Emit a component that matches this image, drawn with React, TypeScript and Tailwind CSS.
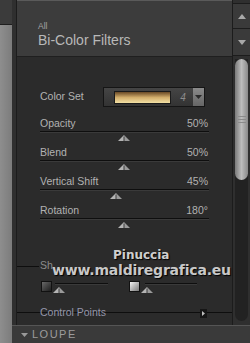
import React from "react";

const Thumb: React.FC<{ left: number }> = ({ left }) => (
  <svg
    width="12"
    height="6"
    viewBox="0 0 12 6"
    className="absolute top-[2px]"
    style={{ left: left - 6 }}
  >
    <polygon points="0,6 6,0 6,6" fill="#b4b4b4" />
    <polygon points="6,0 12,6 6,6" fill="#9a9a9a" />
    <line x1="6" y1="1.5" x2="6" y2="6" stroke="#3a3a3a" strokeWidth="1" />
  </svg>
);

const SliderRow: React.FC<{ label: string; value: string; pct: number }> = ({
  label,
  value,
  pct,
}) => (
  <div className="h-[29px]">
    <div className="flex h-[14px] items-center justify-between text-[10.5px] text-[#b2b2b2]">
      <span>{label}</span>
      <span className="pr-[1px]">{value}</span>
    </div>
    <div className="h-px bg-[#0e0e0e]" />
    <div className="h-px bg-[#3a3a3a]" />
    <div className="relative h-[13px]">
      <Thumb left={(168 * pct) / 100} />
    </div>
  </div>
);

const App: React.FC = () => {
  return (
    <div
      className="relative flex h-[343px] w-[250px] overflow-hidden bg-[#2b2b2b]"
      style={{ fontFamily: '"Liberation Sans", Arial, sans-serif' }}
    >
      {/* left neighbour strip */}
      <div className="flex w-[12px] flex-col">
        <div className="h-[25px] border-b border-[#1e1e1e] bg-[#3b3b3b]" />
        <div className="flex-1 bg-gradient-to-r from-[#8e8e8e] to-[#7c7c7c]" />
      </div>

      <div className="flex flex-1 flex-col">
        <div className="flex h-[325px]">
          <div className="w-[5px] border-r border-[#1c1c1c] bg-[#2f2f2f]" />

          {/* panel */}
          <div className="flex flex-1 flex-col border-t border-[#5a5a5a]">
            <div className="h-[56px] border-b border-[#1f1f1f] bg-[#3c3c3c] pl-[21px] pt-[20px]">
              <div className="text-[8.5px] leading-[10px] text-[#a4a4a4]">All</div>
              <div className="mt-[1px] text-[14px] leading-[17px] text-[#b8b8b8]">Bi-Color Filters</div>
            </div>

            <div className="flex-1 bg-[#2b2b2b] pl-[23px] pr-[23px] pt-[30px]">
              {/* color set */}
              <div className="flex h-[20px] items-center">
                <span className="w-[63px] text-[10.5px] text-[#b2b2b2]">Color Set</span>
                <div className="flex h-[20px] w-[102px] items-center border border-[#151515] bg-gradient-to-b from-[#454545] to-[#333333]">
                  <div className="ml-[10px] h-[13px] w-[58px] border border-[#1a1a1a] bg-gradient-to-b from-[#6a4a26] via-[#d2ae6c] to-[#f2e0a4]" />
                  <span className="ml-[9px] w-[13px] text-[10px] italic text-[#8c8c8c]">4</span>
                  <div className="flex h-[18px] w-[11px] items-center justify-center bg-gradient-to-b from-[#8a8a8a] to-[#666666]">
                    <svg width="7" height="4" viewBox="0 0 7 4">
                      <polygon points="0,0 7,0 3.5,4" fill="#2a2a2a" />
                    </svg>
                  </div>
                </div>
              </div>

              <div className="mt-[10px]">
                <SliderRow label="Opacity" value="50%" pct={50} />
                <SliderRow label="Blend" value="50%" pct={50} />
                <SliderRow label="Vertical Shift" value="45%" pct={45} />
                <SliderRow label="Rotation" value="180°" pct={50} />
              </div>

              {/* shadows / highlights, mostly hidden under the watermark */}
              <div className="-ml-[23px] mt-[26px] flex h-[14px] items-center">
                <div className="h-px w-[22px] bg-[#0e0e0e]" />
                <span className="ml-[1px] text-[10.5px] text-[#8c8c8c]">Sh</span>
              </div>
              <div className="mt-[8px] flex h-[12px] items-start">
                <div className="ml-[1px] h-[11px] w-[11px] border border-[#111] bg-gradient-to-br from-[#6a6a6a] to-[#1e1e1e]" />
                <div className="relative ml-[3px] w-[53px]">
                  <div className="mt-[2px] h-px bg-[#0e0e0e]" />
                  <div className="h-px bg-[#3a3a3a]" />
                  <div className="relative">
                    <Thumb left={4} />
                  </div>
                </div>
                <div className="ml-[21px] h-[11px] w-[11px] border border-[#111] bg-gradient-to-br from-[#f4f4f4] to-[#7a7a7a]" />
                <div className="relative ml-[5px] w-[52px]">
                  <div className="mt-[2px] h-px bg-[#0e0e0e]" />
                  <div className="h-px bg-[#3a3a3a]" />
                  <div className="relative">
                    <Thumb left={2} />
                  </div>
                </div>
              </div>

              {/* control points */}
              <div className="relative -ml-[23px] -mr-[23px] mt-[13px] flex h-[14px] items-center">
                <div className="absolute left-0 right-0 top-[6px] h-px bg-[#0e0e0e]" />
                <span className="relative ml-[23px] text-[10.5px] text-[#9496aa]">Control Points</span>
                <div className="relative ml-auto mr-[25px] flex h-[9px] w-[7px] items-center justify-center bg-[#161616]">
                  <svg width="3" height="5" viewBox="0 0 3 5">
                    <polygon points="0,0 3,2.5 0,5" fill="#bdbdbd" />
                  </svg>
                </div>
              </div>
            </div>
          </div>

          {/* scroll column */}
          <div className="flex w-[18px] flex-col border-l border-[#1c1c1c] bg-[#2f2f2f]">
            <div className="mt-[3px] flex h-[26px] items-center justify-center border-y border-[#1c1c1c] bg-[#3a3a3a]">
              <svg width="8" height="5" viewBox="0 0 8 5">
                <polygon points="0,5 4,0 8,5" fill="#a8a8a8" />
              </svg>
            </div>
            <div className="flex h-[27px] items-center justify-center border-b border-[#1c1c1c] bg-[#3a3a3a]">
              <svg width="8" height="5" viewBox="0 0 8 5">
                <polygon points="0,0 8,0 4,5" fill="#a8a8a8" />
              </svg>
            </div>
            <div className="mx-[2px] mb-[4px] mt-[3px] flex flex-1 flex-col rounded-b-full bg-[#222222]">
              <div className="flex h-[121px] flex-col items-center justify-center gap-[2px] rounded-full bg-gradient-to-r from-[#7a7a7a] via-[#bdbdbd] to-[#8a8a8a]">
                <div className="h-px w-[8px] bg-[#8a8a8a]" />
                <div className="h-px w-[8px] bg-[#8a8a8a]" />
                <div className="h-px w-[8px] bg-[#8a8a8a]" />
              </div>
            </div>
          </div>
        </div>

        {/* loupe bar */}
        <div className="flex h-[18px] items-center border-t border-[#555555] bg-[#3a3a3a] pl-[9px]">
          <svg width="7" height="4" viewBox="0 0 7 4">
            <polygon points="0,0 7,0 3.5,4" fill="#9a9a9a" />
          </svg>
          <span className="ml-[4px] text-[11px] tracking-[1.5px] text-[#9c9c9c]">LOUPE</span>
        </div>
      </div>

      {/* watermark */}
      <div className="absolute left-[113px] top-[249px] text-[12px] font-bold leading-[13px] text-[#cfcfcf] [font-family:'DejaVu_Sans',sans-serif] [text-shadow:1px_1px_1px_#000]">
        Pinuccia
      </div>
      <div className="absolute left-[52px] top-[263px] text-[14px] font-bold leading-[15px] tracking-[-0.2px] text-[#c8c8c8] [font-family:'DejaVu_Sans',sans-serif] [text-shadow:1px_1px_1px_#000]">
        www.maldiregrafica.eu
      </div>
    </div>
  );
};

export default App;
